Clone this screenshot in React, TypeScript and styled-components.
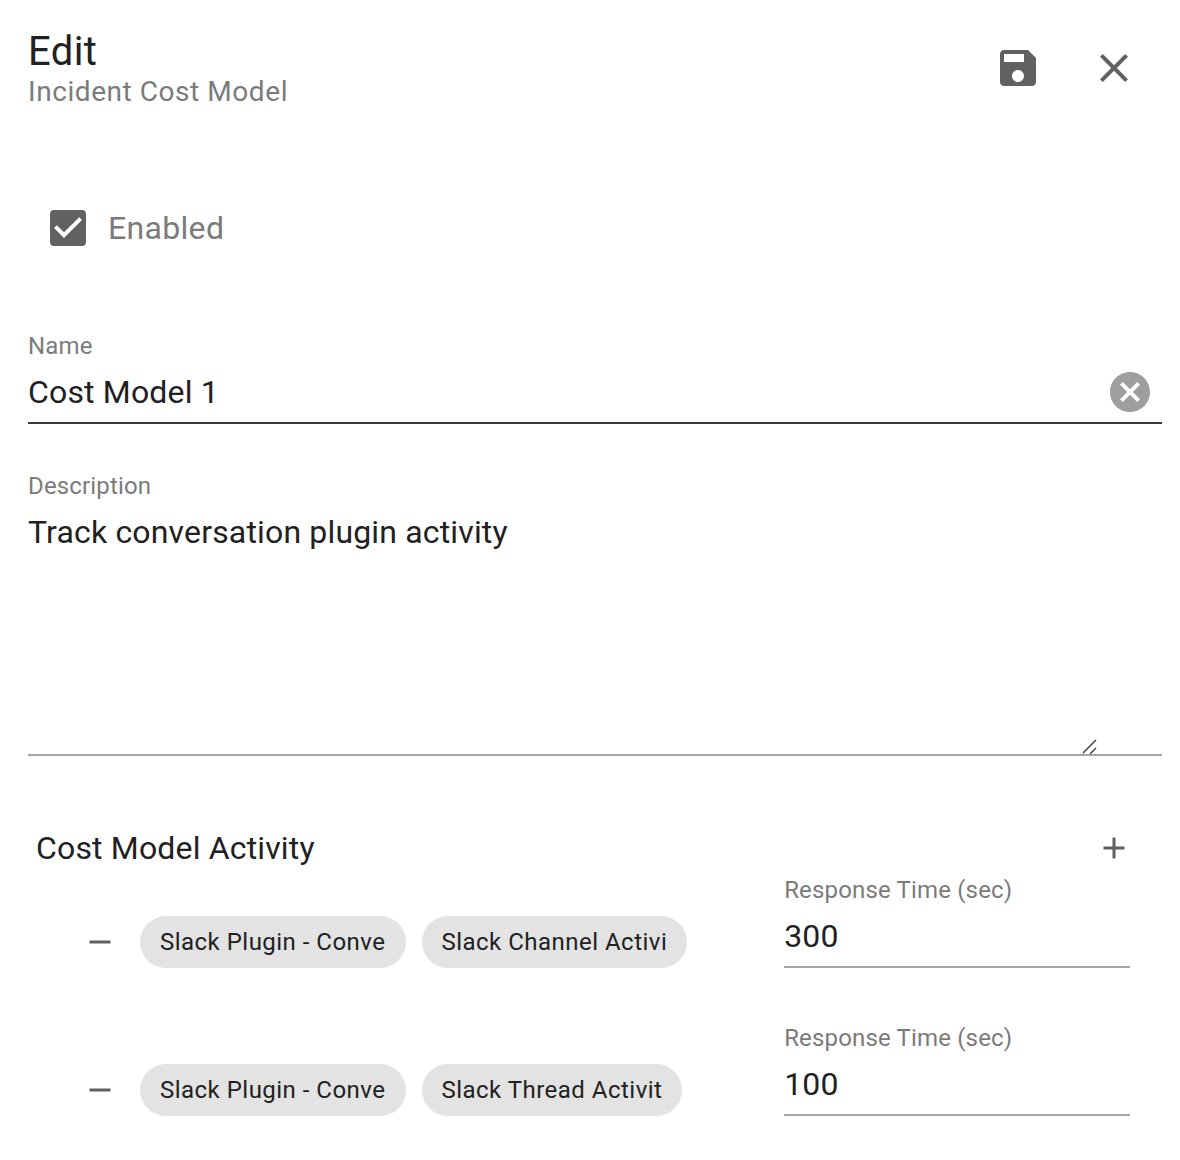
import React, { useState } from "react";
import styled, { createGlobalStyle } from "styled-components";

const GlobalStyle = createGlobalStyle`
  *, *::before, *::after { box-sizing: border-box; }
  body {
    margin: 0;
    background: #fff;
    color: #212121;
    font-family: Roboto, "Liberation Sans", sans-serif;
    letter-spacing: 0.01em;
  }
  button, input, textarea { font: inherit; color: inherit; letter-spacing: inherit; }
`;

const Form = styled.form`
  padding: 28px 18px 28px 28px;
`;

const Header = styled.header`
  display: flex;
  justify-content: space-between;
  align-items: flex-start;
  padding-right: 12px;
`;

const Title = styled.h1`
  margin: 0;
  font-size: 40px;
  line-height: 48px;
  font-weight: 400;
  letter-spacing: 0.01em;
`;

const Subtitle = styled.p`
  margin: 0;
  font-size: 28px;
  line-height: 32px;
  letter-spacing: 0.02em;
  color: #7b7b7b;
`;

const Actions = styled.div`
  display: flex;
  gap: 24px;
  padding-top: 4px;
`;

const IconButton = styled.button<{ $size: number }>`
  display: flex;
  flex: none;
  align-items: center;
  justify-content: center;
  width: ${(p) => p.$size}px;
  height: ${(p) => p.$size}px;
  padding: 0;
  border: 0;
  border-radius: 50%;
  background: none;
  color: #616161;
  cursor: pointer;
  svg { flex: none; }
`;

const CheckRow = styled.label`
  display: flex;
  align-items: center;
  gap: 22px;
  width: fit-content;
  margin: 96px 0 0 22px;
  height: 48px;
  font-size: 32px;
  line-height: 48px;
  letter-spacing: 0.01em;
  color: #7b7b7b;
`;

const CheckBox = styled.input`
  appearance: none;
  width: 36px;
  height: 36px;
  margin: 0;
  border-radius: 4px;
  border: 4px solid #616161;
  &:checked {
    border: 0;
    background: #616161 url("data:image/svg+xml,%3Csvg xmlns='http://www.w3.org/2000/svg' viewBox='3 3 18 18'%3E%3Cpath d='M10 17 5 12 6.41 10.58 10 14.17 17.59 6.58 19 8z' fill='white'/%3E%3C/svg%3E") center / 36px 36px no-repeat;
  }
`;

const Field = styled.div<{ $strong?: boolean }>`
  display: flex;
  flex-direction: column;
  border-bottom: 2px solid ${(p) => (p.$strong ? "#3a3a3a" : "#a6a6a6")};
`;

const FieldLabel = styled.label`
  font-size: 24px;
  line-height: 28px;
  color: #7b7b7b;
`;

const InputLine = styled.div`
  display: flex;
  align-items: center;
  height: 62px;
  padding: 2px 12px 0 0;
`;

const TextInput = styled.input`
  flex: 1;
  min-width: 0;
  height: 60px;
  padding: 0;
  border: 0;
  outline: 0;
  background: none;
  font-size: 32px;
`;

const Description = styled.textarea`
  width: calc(100% - 64px);
  height: 254px;
  padding: 14px 0 0;
  border: 0;
  outline: 0;
  background: none;
  resize: vertical;
  font-size: 32px;
  line-height: 36px;
  &::-webkit-resizer {
    background: url("data:image/svg+xml,%3Csvg xmlns='http://www.w3.org/2000/svg' viewBox='0 0 16 16'%3E%3Cpath d='M0 16 14 2M8 16 14 10' fill='none' stroke='%23444' stroke-width='1.5'/%3E%3C/svg%3E") right bottom / 16px 16px no-repeat;
  }
`;

const Fields = styled.div`
  display: grid;
  gap: 48px;
  margin-top: 80px;
`;

const SectionHead = styled.div`
  display: flex;
  align-items: center;
  justify-content: space-between;
  height: 48px;
  margin-top: 68px;
  padding: 0 24px 0 8px;
`;

const SectionTitle = styled.h2`
  margin: 0;
  font-size: 32px;
  font-weight: 400;
`;

const ActivityList = styled.ul`
  display: grid;
  gap: 56px;
  margin: 4px 32px 0 54px;
  padding: 0;
  list-style: none;
`;

const ActivityRow = styled.li`
  display: grid;
  grid-template-columns: minmax(0, 1fr) 33%;
`;

const Chips = styled.div`
  display: flex;
  align-items: center;
  gap: 16px;
  padding-top: 40px;
`;

const RemoveButton = styled(IconButton)`
  margin-right: 6px;
`;

const Chip = styled.span`
  flex: none;
  height: 52px;
  padding: 0 20px;
  border-radius: 26px;
  background: #e3e3e3;
  font-size: 24px;
  line-height: 52px;
  letter-spacing: 0.02em;
  white-space: nowrap;
`;

type Activity = { id: string; plugin: string; type: string; seconds: string };

const activities: Activity[] = [
  { id: "channel", plugin: "Slack Plugin - Conve", type: "Slack Channel Activi", seconds: "300" },
  { id: "thread", plugin: "Slack Plugin - Conve", type: "Slack Thread Activit", seconds: "100" },
];

const icons = {
  save: "M17 3H5c-1.110 0-2 .9-2 2v14c0 1.100.89 2 2 2h14c1.100 0 2-.9 2-2V7l-4-4zm-5 16c-1.660 0-3-1.340-3-3s1.340-3 3-3 3 1.340 3 3-1.340 3-3 3zm3-10H5V5h10v4z",
  close: "M19 6.410 17.590 5 12 10.590 6.410 5 5 6.410 10.590 12 5 17.590 6.410 19 12 13.410 17.590 19 19 17.590 13.410 12z",
  clear: "M12 2C6.470 2 2 6.470 2 12s4.470 10 10 10 10-4.470 10-10S17.530 2 12 2zm5 13.590L15.590 17 12 13.410 8.410 17 7 15.590 10.590 12 7 8.410 8.410 7 12 10.590 15.590 7 17 8.410 13.410 12 17 15.590z",
  plus: "M19 13h-6v6h-2v-6H5v-2h6V5h2v6h6v2z",
  minus: "M19 13H5v-2h14v2z",
};

function Icon({ name, size, color = "currentColor" }: { name: keyof typeof icons; size: number; color?: string }) {
  return (
    <svg width={size} height={size} viewBox="0 0 24 24" fill={color} aria-hidden="true">
      <path d={icons[name]} />
    </svg>
  );
}

function ResponseTime({ id, initial }: { id: string; initial: string }) {
  return (
    <Field>
      <FieldLabel htmlFor={id}>Response Time (sec)</FieldLabel>
      <InputLine>
        <TextInput id={id} inputMode="numeric" defaultValue={initial} />
      </InputLine>
    </Field>
  );
}

export default function App() {
  const [name, setName] = useState("Cost Model 1");
  return (
    <>
      <GlobalStyle />
      <Form onSubmit={(e) => e.preventDefault()}>
        <Header>
          <div>
            <Title>Edit</Title>
            <Subtitle>Incident Cost Model</Subtitle>
          </div>
          <Actions>
            <IconButton $size={72} type="submit" aria-label="Save"><Icon name="save" size={48} /></IconButton>
            <IconButton $size={72} type="button" aria-label="Close"><Icon name="close" size={48} /></IconButton>
          </Actions>
        </Header>
        <CheckRow>
          <CheckBox type="checkbox" defaultChecked />
          Enabled
        </CheckRow>
        <Fields>
          <Field $strong>
            <FieldLabel htmlFor="name">Name</FieldLabel>
            <InputLine>
              <TextInput id="name" value={name} onChange={(e) => setName(e.target.value)} />
              <IconButton $size={40} type="button" aria-label="Clear name" onClick={() => setName("")}>
                <Icon name="clear" size={48} color="#9e9e9e" />
              </IconButton>
            </InputLine>
          </Field>
          <Field>
            <FieldLabel htmlFor="description">Description</FieldLabel>
            <Description id="description" defaultValue="Track conversation plugin activity" />
          </Field>
        </Fields>
        <SectionHead>
          <SectionTitle>Cost Model Activity</SectionTitle>
          <IconButton $size={48} type="button" aria-label="Add activity"><Icon name="plus" size={36} /></IconButton>
        </SectionHead>
        <ActivityList>
          {activities.map((a) => (
            <ActivityRow key={a.id}>
              <Chips>
                <RemoveButton $size={36} type="button" aria-label="Remove activity"><Icon name="minus" size={36} /></RemoveButton>
                <Chip>{a.plugin}</Chip>
                <Chip>{a.type}</Chip>
              </Chips>
              <ResponseTime id={`time-${a.id}`} initial={a.seconds} />
            </ActivityRow>
          ))}
        </ActivityList>
      </Form>
    </>
  );
}
